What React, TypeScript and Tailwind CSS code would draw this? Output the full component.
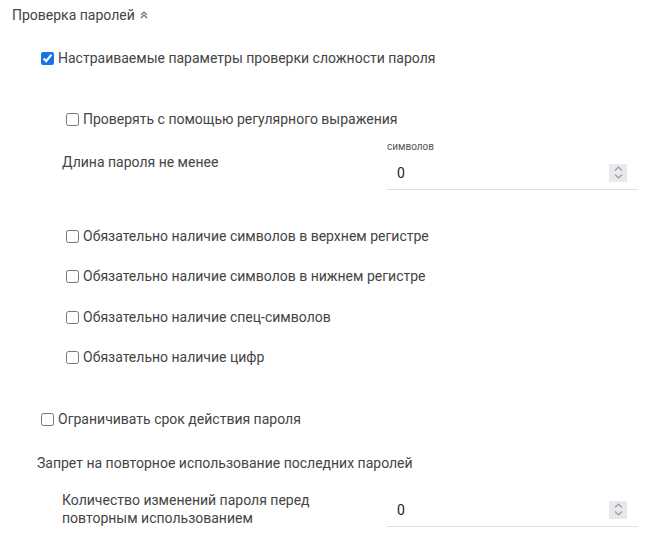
import React from 'react';

function Spinner() {
  return (
    <div className="w-[18px] h-[18px] bg-[#e9e9ed] flex flex-col items-center justify-center gap-[3px]">
      <svg width="9" height="5" viewBox="0 0 9 5" fill="none" stroke="#9a9a9a" strokeWidth="1.2">
        <path d="M1 4.5 L4.5 1 L8 4.5" />
      </svg>
      <svg width="9" height="5" viewBox="0 0 9 5" fill="none" stroke="#9a9a9a" strokeWidth="1.2">
        <path d="M1 0.5 L4.5 4 L8 0.5" />
      </svg>
    </div>
  );
}

function NumberField({ caption }: { caption?: string }) {
  return (
    <div className="w-[251px] flex flex-col">
      {caption && <div className="mt-[1px] h-[12px] text-[10px] leading-[12px] text-[#555]">{caption}</div>}
      <div className="h-[37px] pt-[3px] border-b border-[#e0e0e0] flex items-center pl-[10px] pr-[11px]">
        <span className="flex-1 text-[14px] text-[#222]">0</span>
        <Spinner />
      </div>
    </div>
  );
}

function Check({ label, checked, className }: { label: string; checked?: boolean; className?: string }) {
  return (
    <label className={`flex items-center h-5 ${className ?? ''}`}>
      <input type="checkbox" defaultChecked={checked} className="m-0 w-[13px] h-[13px] mr-[4px] accent-[#1a73e8]" />
      <span>{label}</span>
    </label>
  );
}

export default function App() {
  return (
    <div className="w-[656px] h-[537px] bg-white text-[14px] leading-5 text-[#444] font-['Roboto','Noto_Sans',sans-serif] overflow-hidden">
      <div className="flex flex-col">
        <div className="mt-[5px] ml-[12px] h-5 flex items-center gap-[5px]">
          <span>Проверка паролей</span>
          <svg width="8" height="8" viewBox="0 0 8 8" fill="none" stroke="#666" strokeWidth="1.1">
            <path d="M1 4 L4 1 L7 4" />
            <path d="M1 7 L4 4 L7 7" />
          </svg>
        </div>

        <Check className="mt-[23px] ml-[41px]" label="Настраиваемые параметры проверки сложности пароля" checked />

        <Check className="mt-[41px] ml-[66px]" label="Проверять с помощью регулярного выражения" />

        <div className="mt-[11px] flex items-start">
          <div className="ml-[62px] mt-[12px] w-[325px]">Длина пароля не менее</div>
          <NumberField caption="символов" />
        </div>

        <Check className="mt-[36px] ml-[66px]" label="Обязательно наличие символов в верхнем регистре" />
        <Check className="mt-[20px] ml-[66px]" label="Обязательно наличие символов в нижнем регистре" />
        <Check className="mt-[21px] ml-[66px]" label="Обязательно наличие спец-символов" />
        <Check className="mt-[20px] ml-[66px]" label="Обязательно наличие цифр" />

        <Check className="mt-[42px] ml-[41px]" label="Ограничивать срок действия пароля" />

        <div className="mt-[24px] ml-[37px] h-5 flex items-center">
          Запрет на повторное использование последних паролей
        </div>

        <div className="mt-[17px] flex items-start">
          <div className="ml-[62px] mt-[1px] w-[325px] leading-[18px]">
            Количество изменений пароля перед
            <br />
            повторным использованием
          </div>
          <NumberField />
        </div>
      </div>
    </div>
  );
}
